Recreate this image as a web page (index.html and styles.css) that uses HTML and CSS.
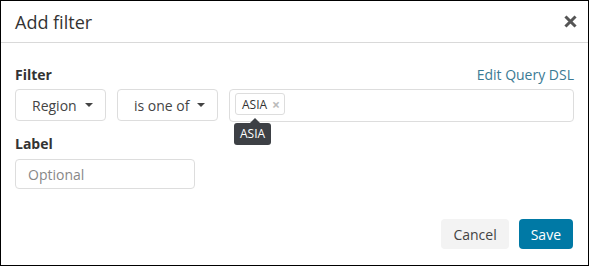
FILE: index.html
```html
<!DOCTYPE html>
<html lang="en">
<head>
    <meta charset="UTF-8">
    <title>Add filter</title>
    <link rel="stylesheet" href="styles.css">
</head>
<body>
    <div class="modal">
        <div class="modal-header">
            <h1>Add filter</h1>
            <button type="button" class="close" aria-label="Close">
                <svg width="13" height="13" viewBox="0 0 13 13">
                    <path d="M2.5 2.5 L10.5 10.5 M10.5 2.5 L2.5 10.5" stroke="#555" stroke-width="3" stroke-linecap="square"/>
                </svg>
            </button>
        </div>

        <div class="modal-body">
            <div class="field-head">
                <label>Filter</label>
                <a href="#" class="link">Edit Query DSL</a>
            </div>
            <div class="filter-row">
                <div class="select select-field">Region <span class="caret"></span></div>
                <div class="select select-op">is one of <span class="caret"></span></div>
                <div class="tags">
                    <span class="tag">ASIA <span class="tag-x">&times;</span>
                        <span class="tooltip">ASIA</span>
                    </span>
                </div>
            </div>

            <label class="label-title">Label</label>
            <input type="text" class="label-input" placeholder="Optional">
        </div>

        <div class="modal-footer">
            <button type="button" class="btn btn-cancel">Cancel</button>
            <button type="button" class="btn btn-save">Save</button>
        </div>
    </div>
</body>
</html>
```

FILE: styles.css
```css
* {
    box-sizing: border-box;
}

body {
    margin: 0;
    font-family: "Open Sans", Arial, sans-serif;
    font-size: 14px;
    color: #333;
    background-color: #fff;
}

.modal {
    width: 589px;
    height: 266px;
    border: 1px solid #000;
    display: flex;
    flex-direction: column;
}

.modal-header {
    height: 42px;
    padding: 0 10px 0 14px;
    border-bottom: 1px solid #d9d9d9;
    display: flex;
    align-items: center;
    justify-content: space-between;
}

h1 {
    margin: 0;
    font-size: 18px;
    font-weight: 400;
    color: #333;
}

.close {
    border: 0;
    background: none;
    padding: 0;
    width: 15px;
    height: 15px;
    display: flex;
    align-items: center;
    justify-content: center;
}

.modal-body {
    padding: 21px 14px 0 14px;
}

.field-head {
    display: flex;
    justify-content: space-between;
    align-items: center;
    height: 20px;
}

label {
    font-weight: bold;
    color: #333;
}

.link {
    color: #3a7a94;
    text-decoration: none;
}

.filter-row {
    display: flex;
    gap: 11px;
    margin-top: 5px;
}

.select {
    height: 32px;
    border: 1px solid #ddd;
    border-radius: 4px;
    display: flex;
    align-items: center;
    justify-content: space-between;
    padding: 0 12px 0 16px;
    color: #444;
}

.select-field {
    width: 91px;
}

.select-op {
    width: 101px;
}

.caret {
    width: 0;
    height: 0;
    border-left: 4px solid transparent;
    border-right: 4px solid transparent;
    border-top: 4px solid #444;
}

.tags {
    flex: 1;
    height: 33px;
    border: 1px solid #ddd;
    border-radius: 4px;
    padding: 3px 5px;
    display: flex;
    align-items: flex-start;
}

.tag {
    position: relative;
    height: 22px;
    border: 1px solid #ddd;
    border-radius: 3px;
    padding: 0 4px 0 6px;
    font-size: 12px;
    color: #333;
    display: flex;
    align-items: center;
    gap: 5px;
}

.tag-x {
    color: #bbb;
    font-size: 14px;
    font-weight: bold;
}

.tooltip {
    position: absolute;
    left: -2px;
    top: 29px;
    padding: 3px 6px;
    background-color: #3d4045;
    color: #fff;
    font-size: 12px;
    border-radius: 3px;
    line-height: 16px;
}

.tooltip::before {
    content: "";
    position: absolute;
    top: -5px;
    left: 16px;
    border-left: 5px solid transparent;
    border-right: 5px solid transparent;
    border-bottom: 5px solid #3d4045;
}

.label-title {
    display: block;
    margin-top: 12px;
    line-height: 20px;
}

.label-input {
    display: block;
    margin-top: 5px;
    width: 180px;
    height: 30px;
    border: 1px solid #ddd;
    border-radius: 4px;
    padding: 0 12px;
    font-family: "Open Sans", Arial, sans-serif;
    font-size: 14px;
}

.label-input::placeholder {
    color: #888;
}

.modal-footer {
    margin-top: auto;
    padding: 0 15px 16px 0;
    display: flex;
    justify-content: flex-end;
    gap: 10px;
}

.btn {
    height: 30px;
    border: 0;
    border-radius: 4px;
    padding: 0 12px;
    font-family: "Open Sans", Arial, sans-serif;
    font-size: 14px;
}

.btn-cancel {
    background-color: #f3f3f3;
    color: #444;
}

.btn-save {
    background-color: #0079a5;
    color: #fff;
}
```
